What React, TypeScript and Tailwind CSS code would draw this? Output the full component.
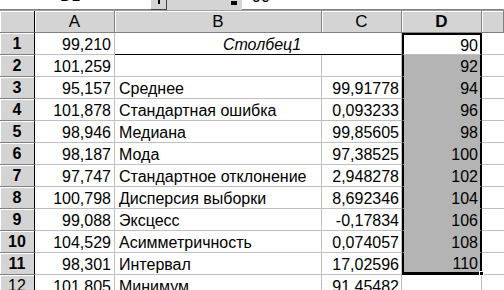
import React from 'react';

const rows = [
  { a: '99,210', b: '', c: '', d: '90' },
  { a: '101,259', b: '', c: '', d: '92' },
  { a: '95,157', b: 'Среднее', c: '99,91778', d: '94' },
  { a: '101,878', b: 'Стандартная ошибка', c: '0,093233', d: '96' },
  { a: '98,946', b: 'Медиана', c: '99,85605', d: '98' },
  { a: '98,187', b: 'Мода', c: '97,38525', d: '100' },
  { a: '97,747', b: 'Стандартное отклонение', c: '2,948278', d: '102' },
  { a: '100,798', b: 'Дисперсия выборки', c: '8,692346', d: '104' },
  { a: '99,088', b: 'Эксцесс', c: '-0,17834', d: '106' },
  { a: '104,529', b: 'Асимметричность', c: '0,074057', d: '108' },
  { a: '98,301', b: 'Интервал', c: '17,02596', d: '110' },
  { a: '101,805', b: 'Минимум', c: '91,45482', d: '' },
];

const hdr =
  'bg-[#d4d4d4] border-r border-b border-[#808080] shadow-[inset_1px_1px_0_#ffffff] flex items-center justify-center';

const FormulaBar = () => (
  <div className="h-[11px] flex overflow-hidden bg-[#d4d4d4] border-b border-[#a0a0a0]">
    <div className="w-[151px] bg-white border-b border-[#808080] relative overflow-hidden">
      <span className="absolute left-[60px] top-[-12px] text-[16px] leading-none">D1</span>
    </div>
    <div className="w-[16px] border-r border-b border-[#404040] bg-[#d4d4d4] flex justify-center">
      <div className="w-[2px] h-[4px] bg-black" />
    </div>
    <div className="w-[75px] flex justify-end pr-[5px]">
      <div className="w-[6px] h-[4px] bg-black mt-[1px]" />
    </div>
    <div className="flex-1 bg-white border-b border-[#808080] relative overflow-hidden">
      <span className="absolute left-[10px] top-[-11px] text-[16px] leading-none">90</span>
    </div>
  </div>
);

export default function App() {
  return (
    <div
      className="w-[504px] h-[290px] overflow-hidden bg-white text-black"
      style={{ fontFamily: '"Liberation Sans", Arial, sans-serif' }}
    >
      <FormulaBar />
      <div className="flex h-[22px] text-[17px]">
        <div className={`w-[35px] ${hdr} border-r-[#000]`} />
        <div className={`w-[80px] ${hdr}`}>A</div>
        <div className={`w-[207px] ${hdr}`}>B</div>
        <div className={`w-[80px] ${hdr}`}>C</div>
        <div className={`w-[80px] ${hdr} font-bold`}>D</div>
        <div className={`flex-1 ${hdr}`} />
      </div>
      {rows.map((r, i) => {
        const n = i + 1;
        const inSel = n <= 11;
        return (
          <div key={n} className="flex h-[22px] text-[16px] leading-none">
            <div
              className={`w-[35px] ${hdr} border-r-[#000] pt-[1px] ${inSel ? 'font-bold' : ''}`}
            >
              {n}
            </div>
            <div className="w-[80px] border-r border-b border-[#c0c0c0] flex items-center justify-end pr-[3px] pt-[2px]">
              {r.a}
            </div>
            {n === 1 ? (
              <div className="w-[287px] border-r border-b border-[#c0c0c0] border-b-black flex items-center justify-center pl-[8px] pt-[2px] italic">
                Столбец1
              </div>
            ) : (
              <>
                <div className="w-[207px] border-r border-b border-[#c0c0c0] flex items-center pl-[4px] pt-[2px] whitespace-nowrap">
                  {r.b}
                </div>
                <div className="w-[80px] border-r border-b border-[#c0c0c0] flex items-center justify-end pr-[2px] pt-[2px]">
                  {r.c}
                </div>
              </>
            )}
            {inSel ? (
              <div
                className={`w-[80px] relative border-x-2 border-black flex items-center justify-end pr-[2px] pt-[2px] ${
                  n === 1 ? 'border-t-2 bg-white border-b border-b-[#c0c0c0]' : 'bg-[#b4b4b4]'
                } ${n === 11 ? 'border-b-[3px]' : n !== 1 ? 'border-b border-b-[#b4b4b4]' : ''}`}
              >
                {r.d}
                {n === 11 && (
                  <div className="absolute right-[-4px] bottom-[-4px] w-[5px] h-[5px] bg-black border border-white" />
                )}
              </div>
            ) : (
              <div className="w-[80px] border-r border-b border-[#c0c0c0]" />
            )}
            <div className="flex-1 border-b border-[#c0c0c0]" />
          </div>
        );
      })}
    </div>
  );
}
